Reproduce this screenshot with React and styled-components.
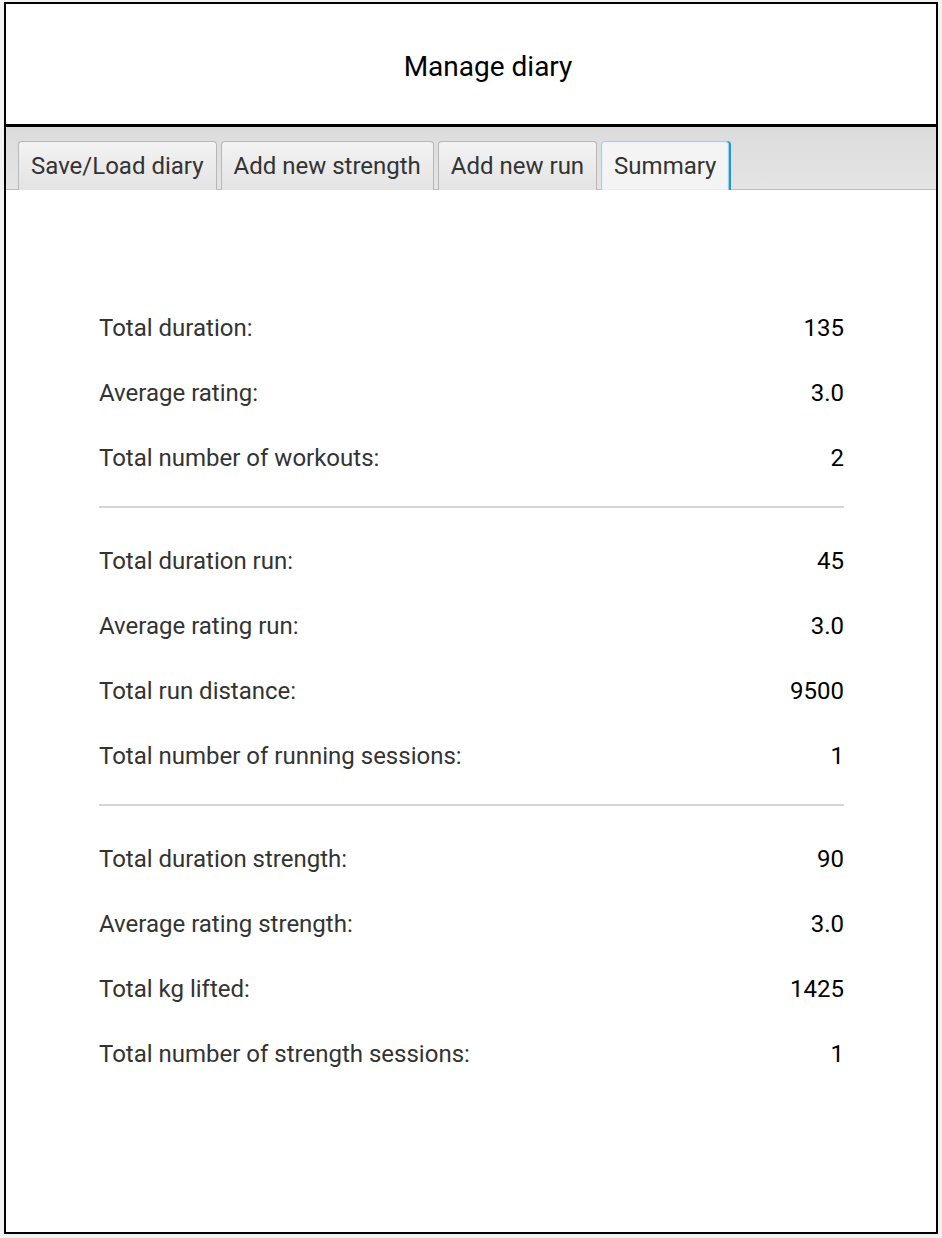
import React from 'react';
import styled, { createGlobalStyle } from 'styled-components';

const GlobalStyle = createGlobalStyle`
  body {
    margin: 0;
    background-color: #f2f2f2;
    font-family: Roboto, "Liberation Sans", sans-serif;
  }
`;

const Frame = styled.div`
  margin: 2px 4px 0;
  width: 930px;
  height: 1228px;
  border: 2px solid #000;
  background-color: #fff;
  display: flex;
  flex-direction: column;
`;

const Header = styled.header`
  height: 123px;
  box-sizing: border-box;
  padding: 4px 0 0 34px;
  border-bottom: 3px solid #000;
  display: flex;
  align-items: center;
  justify-content: center;
  font-size: 28px;
  color: #000;
`;

const TabBar = styled.nav`
  height: 62px;
  display: flex;
  align-items: flex-end;
  gap: 4px;
  padding-left: 12px;
  background: linear-gradient(#dcdcdc, #e4e4e4);
  border-bottom: 1px solid #bdbdbd;
`;

const Tab = styled.div`
  height: 49px;
  box-sizing: border-box;
  padding: 0 12px;
  display: flex;
  align-items: center;
  font-size: 24px;
  color: #333;
  border: 1px solid ${({ $active }) => ($active ? '#9fd2e8' : '#b7b7b7')};
  border-bottom: none;
  border-radius: 4px 4px 0 0;
  background: ${({ $active }) =>
    $active ? '#f4f4f4' : 'linear-gradient(#f3f3f3, #e3e3e3)'};
  box-shadow: ${({ $active }) =>
    $active ? 'inset 0 0 0 1px #e4f2f8, 2px 0 0 0 #1b9ad0' : 'none'};
  margin-bottom: -1px;
`;

const Content = styled.main`
  padding: 105px 92px 0 93px;
  display: flex;
  flex-direction: column;
`;

const Row = styled.div`
  height: 65px;
  display: flex;
  align-items: center;
  justify-content: space-between;
  font-size: 24px;
`;

const Label = styled.span`
  color: #333;
`;

const Value = styled.span`
  color: #000;
`;

const Separator = styled.hr`
  margin: 16px 0 20px;
  border: none;
  border-top: 2px solid #d4d4d4;
`;

const groups = [
  [
    ['Total duration:', '135'],
    ['Average rating:', '3.0'],
    ['Total number of workouts:', '2'],
  ],
  [
    ['Total duration run:', '45'],
    ['Average rating run:', '3.0'],
    ['Total run distance:', '9500'],
    ['Total number of running sessions:', '1'],
  ],
  [
    ['Total duration strength:', '90'],
    ['Average rating strength:', '3.0'],
    ['Total kg lifted:', '1425'],
    ['Total number of strength sessions:', '1'],
  ],
];

const tabs = ['Save/Load diary', 'Add new strength', 'Add new run', 'Summary'];

const App = () => (
  <>
    <GlobalStyle />
    <Frame>
      <Header>Manage diary</Header>
      <TabBar>
        {tabs.map((t) => (
          <Tab key={t} $active={t === 'Summary'}>
            {t}
          </Tab>
        ))}
      </TabBar>
      <Content>
        {groups.map((group, i) => (
          <React.Fragment key={i}>
            {i > 0 && <Separator />}
            {group.map(([label, value]) => (
              <Row key={label}>
                <Label>{label}</Label>
                <Value>{value}</Value>
              </Row>
            ))}
          </React.Fragment>
        ))}
      </Content>
    </Frame>
  </>
);

export default App;
